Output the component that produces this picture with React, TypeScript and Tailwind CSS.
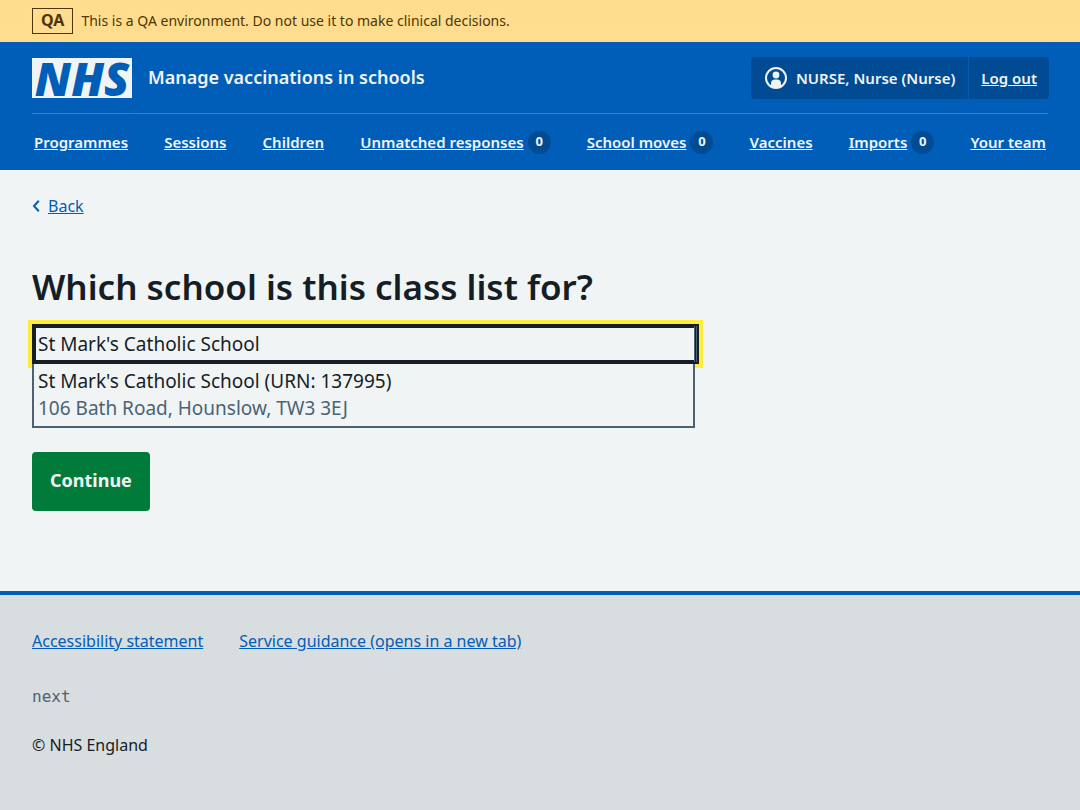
import type { ReactNode } from "react";

const navItems: { label: string; count?: number }[] = [
  { label: "Programmes" },
  { label: "Sessions" },
  { label: "Children" },
  { label: "Unmatched responses", count: 0 },
  { label: "School moves", count: 0 },
  { label: "Vaccines" },
  { label: "Imports", count: 0 },
  { label: "Your team" },
];

function Container({ className = "", children }: { className?: string; children: ReactNode }) {
  return <div className={"mx-8 " + className}>{children}</div>;
}

function EnvironmentBanner() {
  return (
    <div className="bg-[#ffdc8e] py-2 text-[#4d3705]">
      <Container className="flex items-center gap-2">
        <strong className="flex h-[26px] items-center border border-[#4d3705] px-2 pb-0.5 text-base font-bold">QA</strong>
        <span className="text-sm">This is a QA environment. Do not use it to make clinical decisions.</span>
      </Container>
    </div>
  );
}

function UserIcon() {
  return (
    <svg className="size-6 shrink-0" viewBox="0 0 24 24" fill="none" aria-hidden="true">
      <circle cx="12" cy="12" r="10" stroke="currentColor" strokeWidth="2" />
      <circle cx="12" cy="9" r="3.4" fill="currentColor" />
      <path d="M7 20.5V17.5a4 4 0 0 1 4-4h2a4 4 0 0 1 4 4v3A10 10 0 0 1 12 22a10 10 0 0 1-5-1.5Z" fill="currentColor" />
    </svg>
  );
}

function Header() {
  return (
    <header className="bg-[#005eb8] text-[#f0f4f5]">
      <Container>
        <div className="flex items-center justify-between border-b border-[#337ec6] pt-[15px] pb-[14px]">
          <a href="#home" className="flex items-center gap-4">
            <span className="flex h-10 w-[100px] items-center justify-center bg-[#f0f4f5] font-['Open_Sans',sans-serif] text-[46px] leading-none font-extrabold text-[#005eb8] italic">
              NHS
            </span>
            <span className="pb-0.5 text-lg font-semibold">Manage vaccinations in schools</span>
          </a>
          <div className="-mr-px flex h-[42px] items-stretch rounded bg-[#004b93] text-[15px] font-semibold">
            <div className="flex items-center gap-2 px-[13px]">
              <UserIcon />
              NURSE, Nurse (Nurse)
            </div>
            <a href="#logout" className="flex items-center border-l border-[#005eb8] px-3 underline">
              Log out
            </a>
          </div>
        </div>
        <nav aria-label="Menu">
          <ul className="flex h-14 items-center justify-between px-0.5 text-[15px] font-semibold">
            {navItems.map((item) => (
              <li key={item.label}>
                <a href="#menu" className="flex items-center gap-1">
                  <span className="underline">{item.label}</span>
                  {item.count !== undefined && (
                    <span className="flex size-[23px] items-center justify-center rounded-full bg-[#004b93] text-[13px] font-bold">
                      {item.count}
                    </span>
                  )}
                </a>
              </li>
            ))}
          </ul>
        </nav>
      </Container>
    </header>
  );
}

function SchoolForm() {
  return (
    <form onSubmit={(e) => e.preventDefault()}>
      <h1>
        <label htmlFor="school" className="block text-[35px] leading-[42px] font-semibold">
          Which school is this class list for?
        </label>
      </h1>
      <div className="mt-4 w-2/3 max-w-[667px] min-w-80">
        <div className="relative">
          <input
            id="school"
            type="text"
            role="combobox"
            aria-expanded="true"
            aria-controls="school-options"
            defaultValue="St Mark's Catholic School"
            className="block h-10 w-full border-4 border-[#161e25] px-0.5 text-[19px] outline-4 outline-[#ffeb3b]"
          />
          <span className="absolute inset-y-0.5 right-0.5 w-[3px] border-x border-[#4c6272]" aria-hidden="true" />
        </div>
        <ul
          id="school-options"
          role="listbox"
          className="relative mr-1 border-2 border-t-0 border-[#4c6272] bg-[#f0f4f5] p-1 text-[19px] leading-[27px]"
        >
          <li role="option" aria-selected="false">
            St Mark's Catholic School (URN: 137995)
            <span className="block text-[#4c6272]">106 Bath Road, Hounslow, TW3 3EJ</span>
          </li>
        </ul>
      </div>
      <button
        type="submit"
        className="mt-6 h-[59px] rounded bg-[#007b3a] px-[18px] pb-1 text-lg font-bold text-[#f0f4f5]"
      >
        Continue
      </button>
    </form>
  );
}

export default function App() {
  return (
    <div className="flex min-h-screen flex-col bg-[#f0f4f5] font-['Noto_Sans',sans-serif] text-[#161e25]">
      <EnvironmentBanner />
      <Header />
      <Container>
        <a href="#back" className="mt-6 inline-flex items-center gap-2 text-base text-[#005eb8]">
          <svg className="h-3 w-2" viewBox="0 0 8 12" fill="none" stroke="currentColor" strokeWidth="2" aria-hidden="true">
            <path d="M6.8 .8 2 6l4.8 5.2" />
          </svg>
          <span className="underline">Back</span>
        </a>
        <main className="mt-12 pb-20">
          <SchoolForm />
        </main>
      </Container>
      <footer className="grow border-t-4 border-[#005eb8] bg-[#d8dde0]">
        <Container className="pt-[34px] pb-8 text-base">
          <ul className="flex gap-9 text-[#005eb8] underline">
            <li>
              <a href="#accessibility">Accessibility statement</a>
            </li>
            <li>
              <a href="#guidance">Service guidance (opens in a new tab)</a>
            </li>
          </ul>
          <p className="mt-8 font-['DejaVu_Sans_Mono',monospace] text-[#4c6272]">next</p>
          <p className="mt-6">© NHS England</p>
        </Container>
      </footer>
    </div>
  );
}
